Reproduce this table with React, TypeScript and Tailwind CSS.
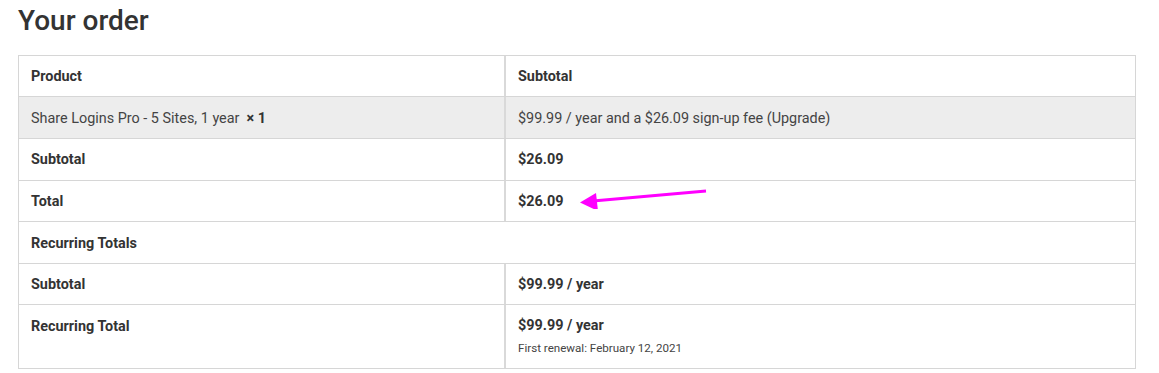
import React from 'react';

type Row = {
  label: string;
  value?: React.ReactNode;
  shaded?: boolean;
  plain?: boolean;
  span?: boolean;
};

const rows: Row[] = [
  { label: 'Product', value: 'Subtotal' },
  {
    label: 'Share Logins Pro - 5 Sites, 1 year',
    value: '$99.99 / year and a $26.09 sign-up fee (Upgrade)',
    shaded: true,
    plain: true,
  },
  { label: 'Subtotal', value: '$26.09' },
  { label: 'Total', value: '$26.09' },
  { label: 'Recurring Totals', span: true },
  { label: 'Subtotal', value: '$99.99 / year' },
];

function PointerArrow() {
  return (
    <svg
      className="absolute left-[73px] top-[4px] pointer-events-none"
      width="130"
      height="24"
      viewBox="0 0 130 24"
    >
      <line x1="127" y1="6" x2="14" y2="16" stroke="#ff00ff" strokeWidth="3" />
      <polygon points="1,17.5 17,8 19,26" fill="#ff00ff" />
    </svg>
  );
}

export default function App() {
  return (
    <div className="w-[1159px] h-[373px] bg-white px-[18px] pt-[2px] font-['Roboto','Liberation_Sans',sans-serif] text-[#333]">
      <h2 className="text-[28px] leading-[37px] font-medium text-[#333] mb-[16px]">Your order</h2>

      <div className="w-[1118px] border border-[#d6d6d6] text-[14.4px]">
        {rows.map((row, i) => (
          <div
            key={i}
            className={`grid grid-cols-[487px_1fr] ${i > 0 ? 'h-[41.6px] border-t border-[#d6d6d6]' : 'h-[40.4px]'} ${
              row.shaded ? 'bg-[#ededed]' : 'bg-white'
            }`}
          >
            {row.span ? (
              <div className="col-span-2 flex items-center px-[12px] pt-[2px] font-bold">{row.label}</div>
            ) : (
              <>
                <div
                  className={`flex items-center px-[12px] pt-[2px] border-r-2 border-[#d9d9d9] ${
                    row.plain ? 'text-[#444]' : 'font-bold'
                  }`}
                >
                  {row.label}
                  {row.plain && <strong className="ml-[7px] font-bold text-[#333]">× 1</strong>}
                </div>
                <div
                  className={`relative flex items-center px-[12px] pt-[2px] ${row.plain ? 'text-[#444]' : 'font-bold'}`}
                >
                  {row.value}
                  {row.label === 'Total' && <PointerArrow />}
                </div>
              </>
            )}
          </div>
        ))}

        <div className="grid grid-cols-[487px_1fr] h-[64px] border-t border-[#d6d6d6]">
          <div className="px-[12px] pt-[11px] font-bold border-r-2 border-[#d9d9d9]">Recurring Total</div>
          <div className="px-[12px] pt-[11px]">
            <div className="font-bold leading-[20px]">$99.99 / year</div>
            <div className="mt-[5px] text-[11.6px] leading-[14px] text-[#444]">First renewal: February 12, 2021</div>
          </div>
        </div>
      </div>
    </div>
  );
}
